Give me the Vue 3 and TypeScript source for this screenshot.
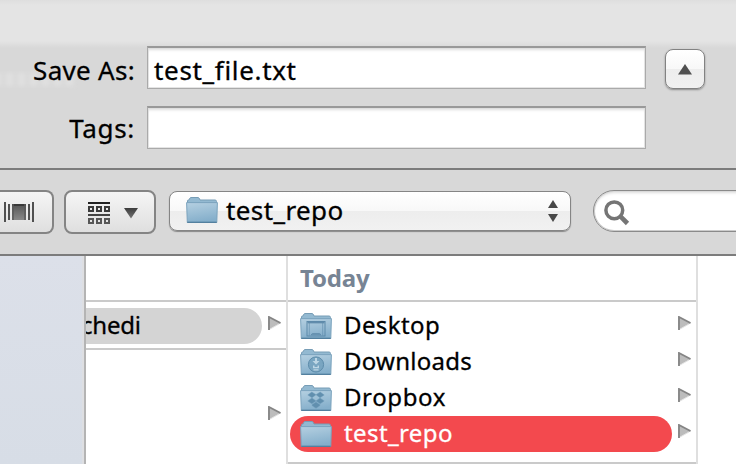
<script setup lang="ts">
import { ref } from 'vue'

interface Entry {
  name: string
  kind: 'desktop' | 'downloads' | 'dropbox' | 'plain'
  selected: boolean
}

const fileName = ref('test_file.txt')
const entries: Entry[] = [
  { name: 'Desktop', kind: 'desktop', selected: false },
  { name: 'Downloads', kind: 'downloads', selected: false },
  { name: 'Dropbox', kind: 'dropbox', selected: false },
  { name: 'test_repo', kind: 'plain', selected: true },
]
</script>

<template>
  <div class="dialog">
    <svg class="defs" width="0" height="0" aria-hidden="true">
      <defs>
        <linearGradient id="front" x1="0" y1="0" x2="0.25" y2="1">
          <stop offset="0" stop-color="#b5d0e1" />
          <stop offset="1" stop-color="#85afcb" />
        </linearGradient>
        <linearGradient id="dark" x1="0" y1="0" x2="0" y2="1">
          <stop offset="0" stop-color="#3c3c3c" />
          <stop offset="1" stop-color="#747474" />
        </linearGradient>
        <linearGradient id="cover" x1="0" y1="0" x2="0" y2="1">
          <stop offset="0" stop-color="#555" />
          <stop offset="1" stop-color="#888" />
        </linearGradient>
        <symbol id="folder" viewBox="0 0 32 27">
          <path d="M1.5 7V3.800Q1.500 3 2.500 3H3L4 1Q4.300 .5 5 .5H12Q12.700 .5 13 1L14 3H29Q30.500 3 30.500 4.500V7Z" fill="#93b9d1" stroke="#779db6" />
          <path d="M.6 5.600H31.400L30.800 25.500H1.300Z" fill="url(#front)" stroke="#7ba3bd" />
          <path d="M1.300 25.300H30.700" stroke="#527f9e" stroke-width="1.300" />
        </symbol>
        <symbol id="arrow" viewBox="0 0 13 14">
          <path d="M0 0L13 7L0 14Z" fill="#bcbcbc" />
          <path d="M1 14V1L12.500 7" fill="none" stroke="#858585" stroke-width="1.800" />
          <path d="M2.200 13L11 8" stroke="#e4e4e4" stroke-width="1" />
        </symbol>
      </defs>
    </svg>

    <header class="form">
      <div class="ghost"></div>
      <div class="line">
        <label class="label save">Save As:</label>
        <div class="field"><span class="filename">{{ fileName }}</span></div>
        <button class="collapse" aria-label="Collapse">
          <svg width="14" height="11" viewBox="0 0 14 11"><path d="M7 0L14 10.500H0Z" fill="#505050" /></svg>
        </button>
      </div>
      <div class="line second">
        <label class="label tags">Tags:</label>
        <div class="field"></div>
      </div>
    </header>

    <nav class="toolbar">
      <button class="segment" aria-label="Cover flow">
        <svg width="30" height="20" viewBox="0 0 30 20">
          <path d="M1 0V20M29 0V20M5 2V18M25 2V18" stroke="#505050" stroke-width="2" />
          <rect x="8" y="2" width="14" height="16" fill="url(#cover)" />
          <path d="M8 3H22" stroke="#3a3a3a" stroke-width="2" />
          <path d="M9 2V18M21 2V18" stroke="#5a5a5a" stroke-width="1.500" />
        </svg>
      </button>
      <button class="arrange" aria-label="Arrange">
        <svg width="50" height="22" viewBox="0 0 50 22">
          <path d="M0 1H22" stroke="#222" stroke-width="2" />
          <path d="M0 13H22" stroke="#444" stroke-width="2" />
          <path d="M1 5H5V9H1ZM9 5H13V9H9ZM17 5H21V9H17Z" fill="none" stroke="#3b3b3b" stroke-width="2" />
          <path d="M1 17H5V21H1ZM9 17H13V21H9ZM17 17H21V21H17Z" fill="none" stroke="#575757" stroke-width="2" />
          <path d="M36 6H50L43 16.500Z" fill="url(#dark)" />
        </svg>
      </button>
      <button class="popup">
        <svg class="folder" width="32" height="27"><use href="#folder" /></svg>
        <span class="location">test_repo</span>
        <svg class="stepper" width="10" height="22" viewBox="0 0 10 22"><path d="M5 0L10 8H0ZM0 14H10L5 22Z" fill="#484848" /></svg>
      </button>
      <div class="search">
        <svg width="26" height="26" viewBox="0 0 26 26" fill="none" stroke="#757575">
          <circle cx="10.300" cy="10.300" r="8.400" stroke-width="3.500" />
          <path d="M16.200 16.200L23.500 23.500" stroke-width="4.600" />
        </svg>
      </div>
    </nav>

    <main class="browser">
      <aside class="sidebar"></aside>
      <section class="parent">
        <div class="heading"></div>
        <div class="group">
          <div class="row">
            <div class="pill muted"><span class="parent-name">chedi</span></div>
            <svg class="arrow" width="13" height="14"><use href="#arrow" /></svg>
          </div>
        </div>
        <div class="row later">
          <svg class="arrow" width="13" height="14"><use href="#arrow" /></svg>
        </div>
      </section>
      <section class="files">
        <div class="heading">Today</div>
        <div class="list">
          <div v-for="entry in entries" :key="entry.name" class="row">
            <div class="pill" :class="{ selected: entry.selected }">
              <svg class="folder" width="32" height="27" viewBox="0 0 32 27">
                <use href="#folder" width="32" height="27" />
                <g v-if="entry.kind === 'desktop'" fill="none" stroke="#5d8aaa">
                  <rect x="7" y="8.500" width="18" height="14.500" />
                  <path d="M7.500 9.700H24.500" stroke-width="1.300" />
                  <path d="M9.300 10V22.500M22.700 10V22.500" stroke-width=".6" />
                  <path d="M11 21.800L12.500 20.500H19.500L21 21.800Z" fill="#6e98b4" stroke-width=".7" />
                </g>
                <g v-else-if="entry.kind === 'downloads'">
                  <circle cx="16" cy="15.500" r="7.600" fill="#79a5c1" stroke="#5d8cab" />
                  <path d="M15 9H17V12H19.500L16 15.500L12.500 12H15ZM13 16.500H14.500V18H17.500V16.500H19V19.300H13ZM13.500 20.300H18.500V21.500H13.500Z" fill="#bdd6e5" />
                </g>
                <g v-else-if="entry.kind === 'dropbox'" fill="#618fae">
                  <path d="M11.800 7L16 9.700L12 12.700L7.800 10ZM20.200 7L24.200 10L20 12.700L16 9.700ZM12 13.100L16 16L11.800 18.800L7.800 15.900ZM20 13.100L24.200 15.900L20.200 18.800L16 16ZM16 17L20 19.700V20.500L16 23.300L12 20.500V19.700Z" stroke="#709cba" stroke-width=".5" />
                </g>
              </svg>
              <span class="name" :class="entry.kind">{{ entry.name }}</span>
            </div>
            <svg class="arrow" width="13" height="14"><use href="#arrow" /></svg>
          </div>
        </div>
      </section>
    </main>
  </div>
</template>

<style>
body {
  margin: 0;
  overflow: hidden;
}
</style>

<style scoped>
.dialog {
  width: 736px;
  height: 464px;
  overflow: hidden;
  display: flex;
  flex-direction: column;
  background: #fff;
  color: #000;
  font-family: "Noto Sans", "Open Sans", sans-serif;
  font-size: 26px;
  line-height: 40px;
  white-space: nowrap;
  -webkit-text-stroke: 0.3px currentColor;
}
.dialog * {
  box-sizing: border-box;
}
.defs {
  position: absolute;
}
svg {
  display: block;
  flex: none;
}
button {
  margin: 0;
  padding: 0;
  font: inherit;
  color: inherit;
  flex: none;
}
.form {
  position: relative;
  flex: none;
  height: 170px;
  padding-top: 46px;
  border-bottom: 2px solid #7c7c7c;
  background: linear-gradient(#dedede 0, #e4e4e4 5px, #e4e4e4 41px, #d8d8d8 48px);
}
.ghost {
  position: absolute;
  left: -6px;
  top: 73px;
  width: 80px;
  height: 13px;
  background: repeating-linear-gradient(90deg, #e6e6e6 0 7px, #dadada 7px 12px);
  opacity: 0.6;
  filter: blur(2px);
}
.line {
  position: relative;
  display: flex;
  align-items: flex-start;
  height: 43px;
}
.second {
  margin-top: 17px;
}
.label {
  width: 135px;
  margin-right: 12px;
  text-align: right;
  line-height: 48px;
}
.save {
  letter-spacing: 0.3px;
}
.tags {
  letter-spacing: 0.7px;
  line-height: 45px;
}
.field {
  width: 499px;
  height: 43px;
  padding-left: 6px;
  border: 1px solid #aaa;
  border-top: 2px solid #999;
  background: #fff;
  box-shadow: inset 0 3px 3px -1px #ddd, inset 0 0 0 1px #e4e4e4;
  line-height: 44px;
}
.filename {
  letter-spacing: 0.67px;
}
.collapse {
  width: 40px;
  height: 40px;
  margin: 3px 0 0 19px;
  display: grid;
  place-items: center;
  border: 1px solid #828282;
  border-radius: 8px;
  background: linear-gradient(#fff 0, #f8f8f8 49%, #ededed 50%, #f1f1f1 100%);
  box-shadow: 0 1px 2px #888;
}
.toolbar {
  flex: none;
  height: 86px;
  padding-top: 20px;
  display: flex;
  align-items: flex-start;
  border-bottom: 2px solid #7c7c7c;
  background: #d8d8d8;
}
.segment,
.arrange {
  height: 44px;
  display: flex;
  align-items: center;
  border: 2px solid #848484;
  background: linear-gradient(#f5f5f5, #dfdfdf);
}
.segment {
  width: 54px;
  padding-left: 4px;
  border-left: 0;
  border-radius: 0 8px 8px 0;
}
.arrange {
  width: 92px;
  margin-left: 10px;
  padding: 2px 0 0 22px;
  border-radius: 8px;
}
.popup {
  width: 402px;
  height: 40px;
  margin: 1px 0 0 13px;
  padding: 0 12px 2px 16px;
  display: flex;
  align-items: center;
  border: 1px solid #858585;
  border-radius: 8px;
  background: linear-gradient(#fff 0, #f8f8f8 49%, #ededed 50%, #f1f1f1 100%);
  box-shadow: 0 1px 1px #888;
}
.location {
  margin-left: 8px;
  line-height: 38px;
  letter-spacing: 0.4px;
}
.stepper {
  margin: 2px 0 0 auto;
}
.search {
  flex: none;
  width: 180px;
  height: 42px;
  margin-left: 22px;
  padding: 9px 0 0 10px;
  border: 1px solid #8a8a8a;
  border-radius: 21px;
  background: #fff;
  box-shadow: inset 0 3px 3px -1px #ddd, inset 0 0 0 1px #ccc;
}
.browser {
  flex: 1;
  display: flex;
  min-height: 0;
}
.sidebar {
  flex: none;
  width: 86px;
  border-right: 2px solid #b4b4b4;
  background: linear-gradient(90deg, transparent 82px, #dedfe2 82px), linear-gradient(#dce0e9, #d7dde6);
}
.parent {
  width: 202px;
  flex: none;
  border-right: 2px solid #dfdfdf;
}
.files {
  width: 410px;
  flex: none;
  border-right: 2px solid #dfdfdf;
}
.heading {
  height: 46px;
  padding-left: 12px;
  border-bottom: 2px solid #cacaca;
  color: #778494;
  font-size: 24px;
  font-weight: 700;
  line-height: 43px;
  letter-spacing: -0.2px;
  -webkit-text-stroke: 0;
}
.group {
  height: 48px;
  padding-top: 6px;
  border-bottom: 2px solid #cacaca;
}
.row {
  height: 36px;
  display: flex;
  align-items: flex-start;
  font-size: 24px;
}
.pill {
  flex: none;
  height: 36px;
  display: flex;
}
.muted {
  width: 176px;
  border-radius: 0 18px 18px 0;
  background: #d4d4d4;
}
.parent-name {
  margin-left: -5px;
  line-height: 34px;
  letter-spacing: -0.2px;
  clip-path: inset(0 0 0 5px);
}
.arrow {
  margin: 8px 0 0 6px;
}
.later {
  margin-top: 48px;
  padding-left: 176px;
}
.list {
  height: 162px;
  padding: 6px 0 0 2px;
  border-bottom: 2px solid #cacaca;
}
.list .pill {
  width: 382px;
  padding: 5px 0 0 10px;
  border-radius: 18px;
}
.name {
  margin-left: 12px;
  line-height: 23px;
  letter-spacing: 0.4px;
}
.downloads {
  letter-spacing: 0.25px;
}
.dropbox {
  letter-spacing: 0.6px;
}
.list .selected {
  background: #f3494e;
  color: #fff;
}
</style>
